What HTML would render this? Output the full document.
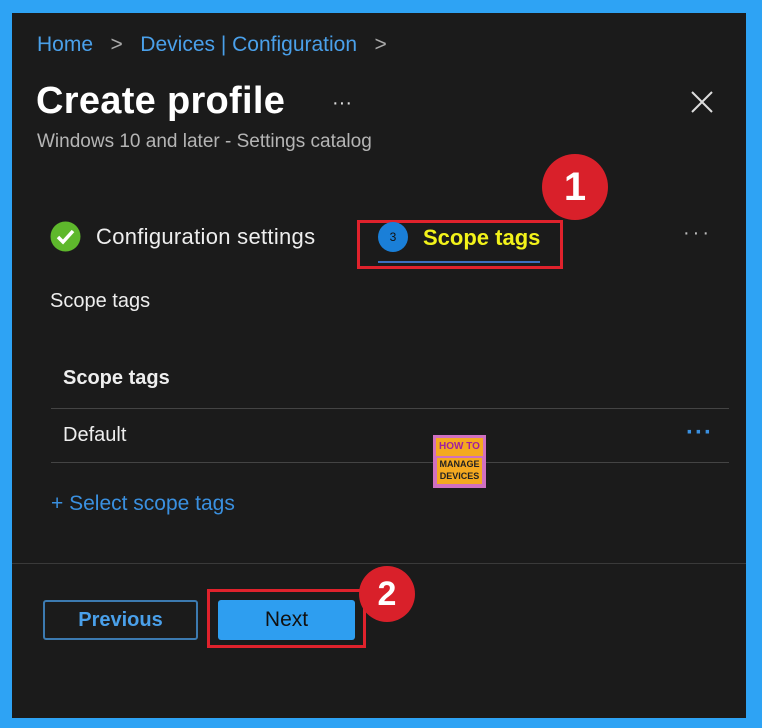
<!DOCTYPE html>
<html><head><style>
body{margin:0;width:762px;height:728px;background:#2ea3f4;font-family:"Liberation Sans",sans-serif;position:relative;overflow:hidden}
.p{position:absolute;left:12px;top:13px;width:734px;height:705px;background:#1b1b1b}
.a{position:absolute;white-space:nowrap}
</style></head><body>
<div class="p"></div>
<div class="a" style="left:37px;top:33px;font-size:21px;color:#4aa0ea">Home <span style="color:#aaa">&nbsp;&nbsp;&gt;&nbsp;&nbsp;</span> Devices | Configuration <span style="color:#aaa">&nbsp;&nbsp;&gt;</span></div>
<div class="a" style="left:36px;top:80px;font-size:38px;font-weight:bold;color:#fff;letter-spacing:0.3px">Create profile</div>
<div class="a" style="left:332px;top:92px;font-size:20px;color:#ddd">···</div>
<svg class="a" style="left:690px;top:90px" width="24" height="24"><path d="M2 2L22 22M22 2L2 22" stroke="#ddd" stroke-width="2"/></svg>
<div class="a" style="left:37px;top:131px;font-size:19px;color:#b5b5b5">Windows 10 and later - Settings catalog</div>
<svg class="a" style="left:50px;top:221px" width="31" height="31"><circle cx="15.5" cy="15.5" r="15" fill="#5eb82c"/><path d="M8 16l5 5 10-11" stroke="#fff" stroke-width="3.5" fill="none"/></svg>
<div class="a" style="left:96px;top:224px;font-size:22px;color:#eee;letter-spacing:0.3px">Configuration settings</div>
<div class="a" style="left:357px;top:220px;width:200px;height:43px;border:3px solid #e0222c"></div>
<div class="a" style="left:378px;top:222px;width:30px;height:30px;border-radius:50%;background:#1a7fd8;color:#111;font-size:12px;text-align:center;line-height:30px">3</div>
<div class="a" style="left:423px;top:225px;font-size:22px;font-weight:bold;color:#f2f21a">Scope tags</div>
<div class="a" style="left:378px;top:261px;width:162px;height:2px;background:#3a6ec0"></div>
<div class="a" style="left:542px;top:154px;width:66px;height:66px;border-radius:50%;background:#d9202a;color:#fff;font-size:40px;font-weight:bold;text-align:center;line-height:66px">1</div>
<div class="a" style="left:683px;top:222px;font-size:20px;color:#bbb;letter-spacing:3px">···</div>
<div class="a" style="left:50px;top:290px;font-size:20px;color:#eee">Scope tags</div>
<div class="a" style="left:63px;top:367px;font-size:20px;font-weight:bold;color:#eee">Scope tags</div>
<div class="a" style="left:51px;top:408px;width:678px;height:1px;background:#444"></div>
<div class="a" style="left:63px;top:424px;font-size:20px;color:#eee">Default</div>
<div class="a" style="left:51px;top:462px;width:678px;height:1px;background:#444"></div>
<div class="a" style="left:686px;top:419px;font-size:24px;font-weight:bold;color:#3a90e0;letter-spacing:1px">···</div>
<div class="a" style="left:433px;top:435px;width:53px;height:53px;background:#d070c0"></div>
<div class="a" style="left:436px;top:438px;width:47px;height:18px;background:#f4a920;color:#a020a0;font-size:10px;font-weight:bold;text-align:center;line-height:18px">HOW TO</div>
<div class="a" style="left:437px;top:458px;width:45px;height:26px;background:#f4a920;color:#222;font-size:9px;font-weight:bold;text-align:center;line-height:12px">MANAGE<br>DEVICES</div>
<div class="a" style="left:51px;top:492px;font-size:21px;color:#3a90e0">+ Select scope tags</div>
<div class="a" style="left:12px;top:563px;width:734px;height:1px;background:#3a3a3a"></div>
<div class="a" style="left:43px;top:600px;width:151px;height:36px;border:2px solid #3c7ab0;border-radius:3px;color:#4aa0ea;font-size:20px;font-weight:bold;text-align:center;line-height:36px">Previous</div>
<div class="a" style="left:207px;top:589px;width:153px;height:53px;border:3px solid #e0222c"></div>
<div class="a" style="left:218px;top:600px;width:137px;height:40px;background:#2e9ef0;border-radius:3px;color:#111;font-size:21px;text-align:center;line-height:40px">Next</div>
<div class="a" style="left:359px;top:566px;width:56px;height:56px;border-radius:50%;background:#d9202a;color:#fff;font-size:34px;font-weight:bold;text-align:center;line-height:56px">2</div>
</body></html>
